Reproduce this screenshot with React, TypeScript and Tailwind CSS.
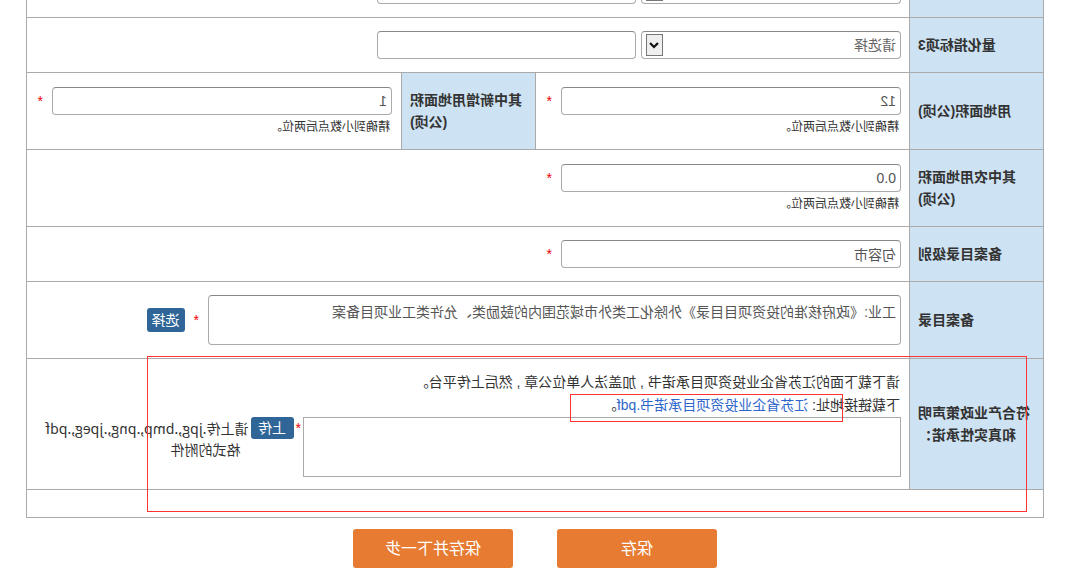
import React from 'react';

const labelCls =
  'w-[134px] shrink-0 box-border border-r border-[#aaa] bg-[#cde2f2] flex items-center justify-end text-right pl-[10px] pr-[8px] font-bold text-[14px] leading-[22px] text-[#333]';

const inputCls =
  'h-[28px] box-border border border-[#aaa] border-t-[#888] rounded-[4px] bg-white pl-[4px] text-[14px] text-[#555] outline-none';

const Star: React.FC<{ className?: string }> = ({ className = '' }) => (
  <span className={`text-[#e00] text-[14px] leading-[28px] ${className}`}>*</span>
);

const Select: React.FC<{ placeholder?: string }> = ({ placeholder = '请选择' }) => (
  <div className="w-[260px] h-[28px] box-border border border-[#aaa] border-t-[#888] rounded-[4px] bg-white flex items-center pl-[4px] text-[14px] text-[#666]">
    <span>{placeholder}</span>
    <span className="ml-auto mr-[4px] w-[17px] h-[22px] box-border border border-[#777] bg-[#efefef] flex items-center justify-center">
      <svg width="12" height="12" viewBox="0 0 12 12">
        <path d="M2 4 L6 8 L10 4" fill="none" stroke="#111" strokeWidth="2.2" />
      </svg>
    </span>
  </div>
);

const Hint: React.FC<{ className?: string }> = ({ className = '' }) => (
  <div className={`mt-[4px] ml-[2px] text-[12px] leading-[16px] text-[#333] ${className}`}>精确到小数点后两位。</div>
);

// row above is scrolled out of view, only the bottom of its fields shows
const IndicatorRow: React.FC<{ label: string; placeholder?: string }> = ({ label, placeholder }) => (
  <div className="flex h-[55px] border-b border-[#aaa]">
    <div className={labelCls}>{label}</div>
    <div className="flex-1 flex items-center gap-[5px] pl-[8px]">
      <Select placeholder={placeholder} />
      <input readOnly defaultValue="" className={`${inputCls} w-[259px]`} />
    </div>
  </div>
);

const App: React.FC = () => {
  return (
    <div className="relative w-[1067px] h-[588px] overflow-hidden bg-white -scale-x-100 font-['Liberation_Sans','Noto_Sans_CJK_SC',sans-serif] text-[#333]">
      <div className="ml-[23px] mt-[-38px] w-[1018px] border border-[#aaa]">
        <IndicatorRow label="" placeholder="" />
        <IndicatorRow label="量化指标项3" />

        {/* 用地面积 */}
        <div className="flex h-[77px] border-b border-[#aaa]">
          <div className={labelCls}>用地面积(公顷)</div>
          <div className="w-[373px] shrink-0 pl-[8px] pt-[14px]">
            <div className="flex items-start">
              <input readOnly defaultValue="12" className={`${inputCls} w-[340px]`} />
              <Star className="ml-[9px]" />
            </div>
            <Hint />
          </div>
          <div className={`${labelCls} w-[135px] border-l`}>其中新增用地面积(公顷)</div>
          <div className="flex-1 pl-[9px] pt-[14px]">
            <div className="flex items-start">
              <input readOnly defaultValue="1" className={`${inputCls} w-[340px]`} />
              <Star className="ml-[9px]" />
            </div>
            <Hint />
          </div>
        </div>

        {/* 其中农用地面积 */}
        <div className="flex h-[77px] border-b border-[#aaa]">
          <div className={labelCls}>其中农用地面积(公顷)</div>
          <div className="flex-1 pl-[8px] pt-[14px]">
            <div className="flex items-start">
              <input readOnly defaultValue="0.0" className={`${inputCls} w-[340px]`} />
              <Star className="ml-[9px]" />
            </div>
            <Hint />
          </div>
        </div>

        {/* 备案目录级别 */}
        <div className="flex h-[55px] border-b border-[#aaa]">
          <div className={labelCls}>备案目录级别</div>
          <div className="flex-1 flex items-center pl-[8px]">
            <input readOnly defaultValue="句容市" className={`${inputCls} w-[340px]`} />
            <Star className="ml-[9px] self-start mt-[13px]" />
          </div>
        </div>

        {/* 备案目录 */}
        <div className="flex h-[77px] border-b border-[#aaa]">
          <div className={labelCls}>备案目录</div>
          <div className="flex-1 flex items-center pl-[8px]">
            <div className="w-[693px] h-[50px] box-border border border-[#aaa] border-t-[#888] rounded-[4px] pl-[4px] pt-[6px] text-[14px] leading-[20px] text-[#555]">
              工业:《政府核准的投资项目目录》外除化工类外市域范围内的鼓励类、允许类工业项目备案
            </div>
            <Star className="ml-[9px]" />
            <button className="ml-[9px] w-[38px] h-[24px] rounded-[3px] bg-[#2f6597] text-white text-[14px] leading-[24px]">
              选择
            </button>
          </div>
        </div>

        {/* 承诺 */}
        <div className="flex h-[131px] border-b border-[#aaa]">
          <div className={labelCls}>符合产业政策声明和真实性承诺：</div>
          <div className="flex-1 pl-[8px] pt-[12px] text-[14px] leading-[23px]">
            <div className="pl-[1px]">请下载下面的江苏省企业投资项目承诺书 , 加盖法人单位公章 , 然后上传平台。</div>
            <div className="pl-[1px]">
              下载链接地址: <span className="text-[#2f66cc]">江苏省企业投资项目承诺书.pdf</span>。
            </div>
            <div className="flex items-start">
              <div className="w-[598px] h-[60px] box-border border border-[#aaa]" />
              <span className="ml-[2px] text-[#e00] text-[14px] leading-[22px]">*</span>
              <button className="ml-[2px] w-[43px] h-[22px] rounded-[3px] bg-[#2f6597] text-white text-[14px] leading-[22px]">
                上传
              </button>
              <div className="ml-[2px] mt-[1px] font-['Noto_Sans_CJK_SC',sans-serif] text-[14px] leading-[21px] text-[#333]">
                <div className="whitespace-nowrap">请上传.jpg,.bmp,.png,.jpeg,.pdf</div>
                <div className="pl-[8px]">格式的附件</div>
              </div>
            </div>
          </div>
        </div>

        <div className="h-[27px]" />
      </div>

      <div className="ml-[23px] w-[1018px] mt-[11px] flex justify-center gap-[44px]">
        <button className="w-[160px] h-[39px] rounded-[3px] bg-[#e67b31] text-white text-[16px]">保存</button>
        <button className="w-[160px] h-[39px] rounded-[3px] bg-[#e67b31] text-white text-[16px]">保存并下一步</button>
      </div>

      {/* red annotation boxes */}
      <div className="absolute left-[40px] top-[356px] w-[880px] h-[156px] border border-[#f33]" />
      <div className="absolute left-[224px] top-[394px] w-[273px] h-[28px] border border-[#f33]" />
    </div>
  );
};

export default App;
